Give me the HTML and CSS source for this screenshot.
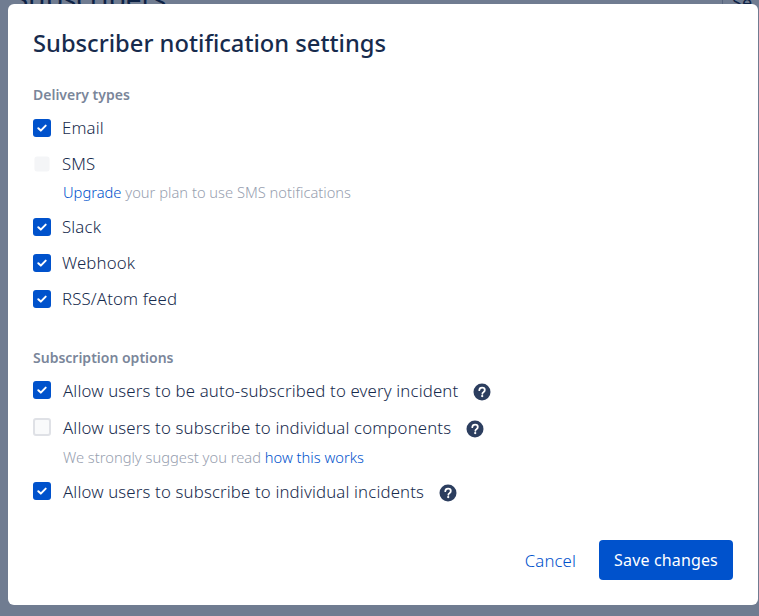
FILE: index.html
```html
<!DOCTYPE html>
<html lang="en">
<head>
<meta charset="utf-8">
<title>Subscriber notification settings</title>
<link rel="stylesheet" href="styles.css">
</head>
<body>
<svg class="defs" width="0" height="0" aria-hidden="true">
  <symbol id="tick" viewBox="0 0 18 18"><path d="M5.3 9.3 7.8 11.6 12.7 6.6" fill="none" stroke="#fff" stroke-width="2" stroke-linecap="round" stroke-linejoin="round"/></symbol>
  <symbol id="help" viewBox="0 0 18 18"><circle cx="9" cy="9" r="8.5" fill="#2c3e5f"/><path d="M6.3 7.2C6.4 5.6 7.6 4.7 9.1 4.7c1.6 0 2.7.9 2.7 2.3 0 1.1-.6 1.7-1.4 2.2-.7.4-1 .8-1 1.6" fill="none" stroke="#fff" stroke-width="1.8" stroke-linecap="round"/><circle cx="9.2" cy="13.1" r="1.15" fill="#fff"/></symbol>
</svg>
<div class="page-behind">
  <h1 class="page-title">Subscribers</h1>
  <div class="page-action">Se</div>
</div>
<div class="overlay"></div>
<main class="modal">
  <h2 class="modal-title">Subscriber notification settings</h2>
  <section class="delivery">
    <h3 class="group-label">Delivery types</h3>
    <div class="row"><span class="box on"><svg><use href="#tick"/></svg></span><span class="label">Email</span></div>
    <div class="row row-disabled"><span class="box disabled"></span><span class="label">SMS</span></div>
    <p class="hint hint-sms"><a>Upgrade</a> your plan to use SMS notifications</p>
    <div class="row"><span class="box on"><svg><use href="#tick"/></svg></span><span class="label">Slack</span></div>
    <div class="row"><span class="box on"><svg><use href="#tick"/></svg></span><span class="label">Webhook</span></div>
    <div class="row"><span class="box on"><svg><use href="#tick"/></svg></span><span class="label">RSS/Atom feed</span></div>
  </section>
  <section class="options">
    <h3 class="group-label">Subscription options</h3>
    <div class="row opt"><span class="box on"><svg><use href="#tick"/></svg></span><span class="label">Allow users to be auto-subscribed to every incident</span><svg class="help"><use href="#help"/></svg></div>
    <div class="row opt"><span class="box off"></span><span class="label">Allow users to subscribe to individual components</span><svg class="help"><use href="#help"/></svg></div>
    <p class="hint hint-opt">We strongly suggest you read <a>how this works</a></p>
    <div class="row opt"><span class="box on"><svg><use href="#tick"/></svg></span><span class="label">Allow users to subscribe to individual incidents</span><svg class="help"><use href="#help"/></svg></div>
  </section>
  <footer class="actions">
    <a class="cancel">Cancel</a>
    <button class="save" type="button">Save changes</button>
  </footer>
</main>
</body>
</html>
```
FILE: styles.css
```css
* { box-sizing: border-box; }
html, body { margin: 0; height: 100%; overflow: hidden; }
body { position: relative; background: #fff; font-family: "Noto Sans", sans-serif; color: #2c3e5f; width: 759px; height: 616px; }
.defs { position: absolute; }
.page-behind { display: flex; justify-content: space-between; padding: 0 0 0 13px; height: 20px; overflow: hidden; }
.page-title { margin: -22px 0 0; font-size: 28px; line-height: 40px; font-weight: 400; color: #172b4d; }
.page-action { width: 37px; margin-top: -8px; border-left: 1px solid #c1c7d0; padding-left: 9px; font-size: 18px; line-height: 20px; color: #172b4d; }
.overlay { position: absolute; inset: 0; background: rgba(9, 30, 66, .58); }
.modal { position: absolute; left: 8px; top: 4px; width: 750px; height: 601px; padding: 24px 25px 25px; background: #fff; border-radius: 6px; display: flex; flex-direction: column; }
.modal-title { margin: 0; font-size: 23.7px; line-height: 30px; font-weight: 500; color: #172b4d; }
.group-label { margin: 0 0 5px; font-size: 14px; line-height: 20px; font-weight: 600; color: #7a869a; }
.delivery { margin-top: 27px; }
.options { margin-top: 31px; }
.row { display: flex; align-items: center; height: 36px; font-size: 16.8px; font-weight: 300; letter-spacing: .15px; color: #172b4d; }
.opt { height: 37px; }
.label { margin-bottom: 2px; }
.box { flex: none; width: 18px; height: 18px; margin-right: 11px; border-radius: 3px; }
.box svg { display: block; width: 18px; height: 18px; }
.box.on { background: #0052cc; }
.box.disabled { background: #f4f5f7; transform: scale(.84); }
.box.off { background: #f9fafb; border: 2px solid #dfe1e6; }
.opt .box { margin-right: 12px; margin-top: -3px; }
.help { flex: none; width: 18px; height: 18px; margin-left: 15px; }
.hint { margin: 0; font-size: 14.7px; line-height: 20px; font-weight: 300; color: #97a0af; }
.hint a { color: #0052cc; }
.hint-sms { margin: 0 0 0 30px; padding-bottom: 7px; }
.hint-opt { margin: 0 0 0 30px; padding-bottom: 7px; }
.actions { margin-top: auto; display: flex; justify-content: flex-end; align-items: center; gap: 23px; }
.cancel { color: #0052cc; font-size: 16.8px; font-weight: 300; letter-spacing: .1px; }
.save { width: 134px; height: 40px; border: 0; border-radius: 4px; background: #0052cc; color: #fff; font: 400 16px "Noto Sans", sans-serif; letter-spacing: .15px; }
```
